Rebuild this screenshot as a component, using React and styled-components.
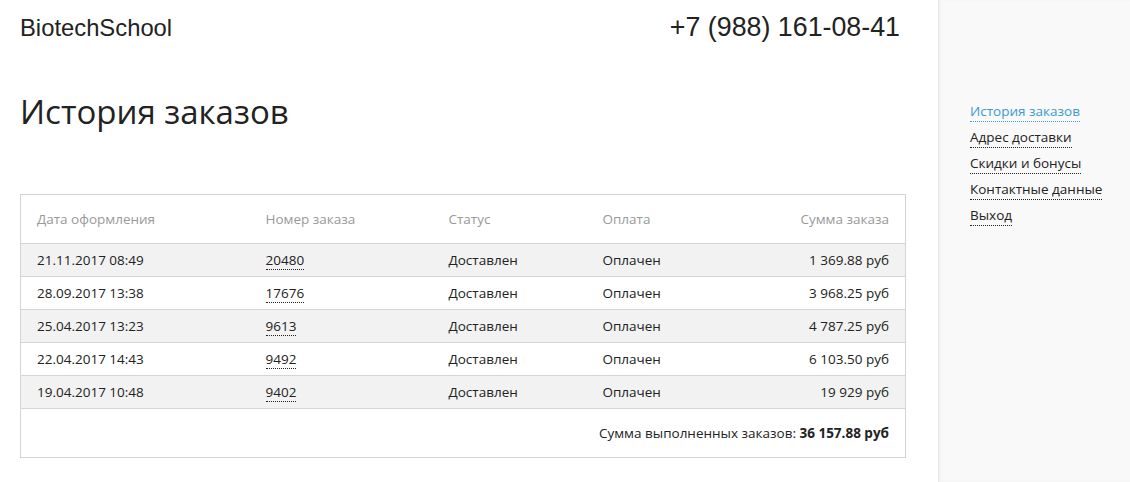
import React from "react";
import styled, { createGlobalStyle } from "styled-components";

const Global = createGlobalStyle`
  html, body { margin: 0; padding: 0; background: #fff; }
  body { font-family: "Open Sans", "Noto Sans", sans-serif; color: #222; }
`;

const Page = styled.div`
  display: flex;
  min-height: 482px;
`;

const Main = styled.main`
  flex: 1;
  padding: 0 32px 0 20px;
`;

const Header = styled.header`
  display: flex;
  justify-content: space-between;
  align-items: baseline;
  padding-top: 12px;
  padding-right: 6px;
`;

const Logo = styled.div`
  font-family: "Liberation Sans", Arial, sans-serif;
  font-size: 23.8px;
  color: #222;
`;

const Phone = styled.div`
  font-family: "Liberation Sans", Arial, sans-serif;
  font-size: 26.8px;
  color: #222;
`;

const Title = styled.h1`
  margin: 49px 0 62px;
  font-family: "Open Sans", sans-serif;
  font-weight: 400;
  font-size: 33px;
  line-height: 40px;
  color: #222;
`;

const Table = styled.table`
  width: 100%;
  border-collapse: collapse;
  table-layout: fixed;
  border: 1px solid #d4d4d4;
  font-size: 13.5px;
`;

const Th = styled.th`
  height: 48px;
  padding: 0 16px;
  font-weight: 400;
  color: #999;
  text-align: ${(p) => (p.$right ? "right" : "left")};
  border-bottom: 1px solid #d4d4d4;
`;

const Tr = styled.tr`
  background: ${(p) => (p.$shade ? "#f2f2f2" : "#fff")};
  border-bottom: 1px solid #d4d4d4;
`;

const Td = styled.td`
  height: 32px;
  padding: 0 16px;
  color: #222;
  text-align: ${(p) => (p.$right ? "right" : "left")};
`;

const OrderLink = styled.a`
  color: #222;
  text-decoration: none;
  border-bottom: 1px dotted #222;
`;

const FooterCell = styled.td`
  height: 48px;
  padding: 0 16px;
  text-align: right;
  color: #222;
`;

const Total = styled.b`
  font-weight: 700;
`;

const Sidebar = styled.aside`
  width: 160px;
  padding: 101px 0 0 31px;
  background: #f9f9f9;
  border-left: 1px solid #e6e6e6;
  box-shadow: inset 2px 0 3px rgba(0, 0, 0, 0.03);
`;

const NavList = styled.nav`
  display: flex;
  flex-direction: column;
  align-items: flex-start;
  gap: 5px;
`;

const NavLink = styled.a`
  font-size: 13.5px;
  line-height: 20px;
  color: ${(p) => (p.$active ? "#3b9ad0" : "#222")};
  text-decoration: none;
  border-bottom: 1px dotted ${(p) => (p.$active ? "#3b9ad0" : "#222")};
  white-space: nowrap;
`;

const orders = [
  ["21.11.2017 08:49", "20480", "Доставлен", "Оплачен", "1 369.88 руб"],
  ["28.09.2017 13:38", "17676", "Доставлен", "Оплачен", "3 968.25 руб"],
  ["25.04.2017 13:23", "9613", "Доставлен", "Оплачен", "4 787.25 руб"],
  ["22.04.2017 14:43", "9492", "Доставлен", "Оплачен", "6 103.50 руб"],
  ["19.04.2017 10:48", "9402", "Доставлен", "Оплачен", "19 929 руб"],
];

const nav = ["История заказов", "Адрес доставки", "Скидки и бонусы", "Контактные данные", "Выход"];

export default function App() {
  return (
    <>
      <Global />
      <Page>
        <Main>
          <Header>
            <Logo>BiotechSchool</Logo>
            <Phone>+7 (988) 161-08-41</Phone>
          </Header>
          <Title>История заказов</Title>
          <Table>
            <colgroup>
              <col style={{ width: 229 }} />
              <col style={{ width: 183 }} />
              <col style={{ width: 154 }} />
              <col style={{ width: 150 }} />
              <col />
            </colgroup>
            <thead>
              <tr>
                <Th>Дата оформления</Th>
                <Th>Номер заказа</Th>
                <Th>Статус</Th>
                <Th>Оплата</Th>
                <Th $right>Сумма заказа</Th>
              </tr>
            </thead>
            <tbody>
              {orders.map((o, i) => (
                <Tr key={o[1]} $shade={i % 2 === 0}>
                  <Td>{o[0]}</Td>
                  <Td><OrderLink href="#">{o[1]}</OrderLink></Td>
                  <Td>{o[2]}</Td>
                  <Td>{o[3]}</Td>
                  <Td $right>{o[4]}</Td>
                </Tr>
              ))}
              <tr>
                <FooterCell colSpan={5}>
                  Сумма выполненных заказов: <Total>36 157.88 руб</Total>
                </FooterCell>
              </tr>
            </tbody>
          </Table>
        </Main>
        <Sidebar>
          <NavList>
            {nav.map((n, i) => (
              <NavLink key={n} href="#" $active={i === 0}>{n}</NavLink>
            ))}
          </NavList>
        </Sidebar>
      </Page>
    </>
  );
}
